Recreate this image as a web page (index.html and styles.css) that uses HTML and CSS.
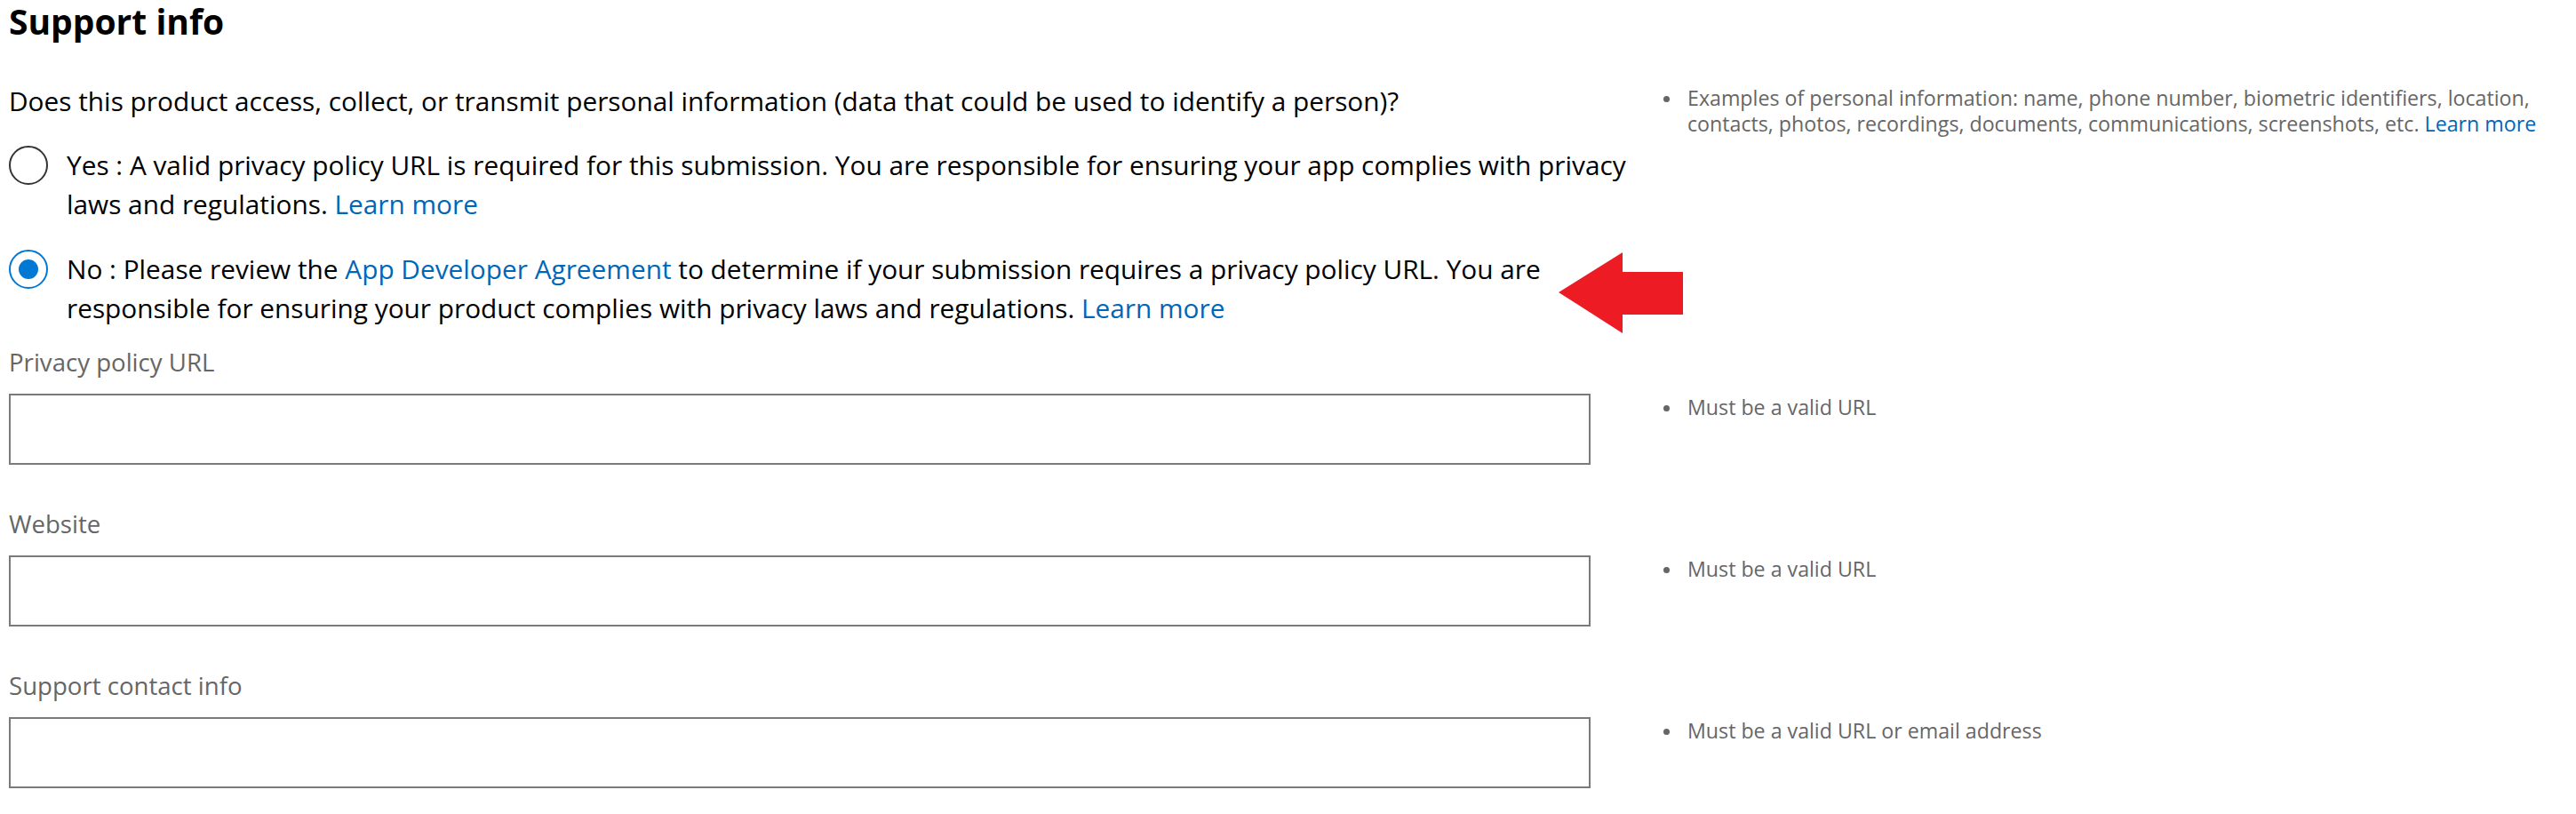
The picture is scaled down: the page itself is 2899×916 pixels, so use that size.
FILE: index.html
```html
<!DOCTYPE html>
<html lang="en">
<head>
<meta charset="utf-8">
<title>Support info</title>
<link rel="stylesheet" href="styles.css">
</head>
<body>
<main class="page">
  <h1 class="title">Support info</h1>
  <div class="grid">
    <section class="main-col">
      <p class="question">Does this product access, collect, or transmit personal information (data that could be used to identify a person)?</p>
      <div class="option">
        <span class="radio"></span>
        <p class="option-text">Yes : A valid privacy policy URL is required for this submission. You are responsible for ensuring your app complies with privacy laws and regulations. <a href="#" class="link">Learn more</a></p>
      </div>
      <div class="option">
        <span class="radio checked"></span>
        <p class="option-text">No : Please review the <a href="#" class="link">App Developer Agreement</a> to determine if your submission requires a privacy policy URL. You are responsible for ensuring your product complies with privacy laws and regulations. <a href="#" class="link">Learn more</a></p>
      </div>
    </section>
    <ul class="hints first">
      <li><span class="hint-text">Examples of personal information: name, phone number, biometric identifiers, location, contacts, photos, recordings, documents, communications, screenshots, etc. <a href="#" class="link">Learn more</a></span></li>
    </ul>

    <div class="field">
      <label class="label">Privacy policy URL</label>
      <div class="input"></div>
    </div>
    <ul class="hints field-hint">
      <li><span class="hint-text">Must be a valid URL</span></li>
    </ul>

    <div class="field">
      <label class="label">Website</label>
      <div class="input"></div>
    </div>
    <ul class="hints field-hint">
      <li><span class="hint-text">Must be a valid URL</span></li>
    </ul>

    <div class="field">
      <label class="label">Support contact info</label>
      <div class="input"></div>
    </div>
    <ul class="hints field-hint">
      <li><span class="hint-text">Must be a valid URL or email address</span></li>
    </ul>
  </div>
  <svg class="arrow" width="142" height="92" viewBox="0 0 142 92" aria-hidden="true">
    <polygon points="0,45 72,0 72,22 140,22 140,70 72,70 72,91" fill="#ed1c24"/>
  </svg>
</main>
</body>
</html>
```

FILE: styles.css
```css
html, body {
  margin: 0;
  padding: 0;
  background: #fff;
}
body {
  font-family: "Segoe UI", "Open Sans", "Noto Sans", sans-serif;
  color: #000;
}
.page {
  position: relative;
  padding: 0 10px;
}
.title {
  margin: 0;
  font-size: 39px;
  font-weight: 700;
  line-height: 48px;
}
.grid {
  display: grid;
  grid-template-columns: 1840px 1fr;
  margin-top: 44.4px;
}
.main-col {
  padding-bottom: 20px;
}
.question {
  margin: 0 0 28px;
  font-size: 29.8px;
  line-height: 44px;
}
.option {
  display: flex;
  align-items: flex-start;
  gap: 21px;
}
.option + .option {
  margin-top: 29px;
}
.option-text {
  margin: 0;
  font-size: 29.8px;
  line-height: 44px;
}
.radio {
  flex: none;
  box-sizing: border-box;
  width: 44px;
  height: 44px;
  border: 2px solid #333;
  border-radius: 50%;
  display: flex;
  align-items: center;
  justify-content: center;
}
.radio.checked {
  border-color: #0078d4;
}
.radio.checked::after {
  content: "";
  width: 22px;
  height: 22px;
  border-radius: 50%;
  background: #0078d4;
}
.link {
  color: #0067b8;
  text-decoration: none;
}
.hints {
  list-style: none;
  margin: 0;
  padding: 0 10px 0 22px;
  font-size: 23.2px;
  line-height: 29px;
  color: #666;
}
.hints li {
  display: flex;
  gap: 20px;
}
.hints li::before {
  content: "";
  flex: none;
  width: 7px;
  height: 7px;
  margin-top: 11.5px;
  border-radius: 50%;
  background: #666;
}
.hints.first {
  padding-top: 4px;
}
.hints.field-hint {
  padding-top: 55px;
}
.field {
  padding-bottom: 48px;
}
.label {
  display: block;
  font-size: 27.6px;
  line-height: 36px;
  color: #666;
  margin-bottom: 18px;
}
.input {
  box-sizing: border-box;
  width: 1780px;
  height: 80px;
  border: 2px solid #7a7a7a;
  background: #fff;
}
.arrow {
  position: absolute;
  left: 1754px;
  top: 284px;
}
```
